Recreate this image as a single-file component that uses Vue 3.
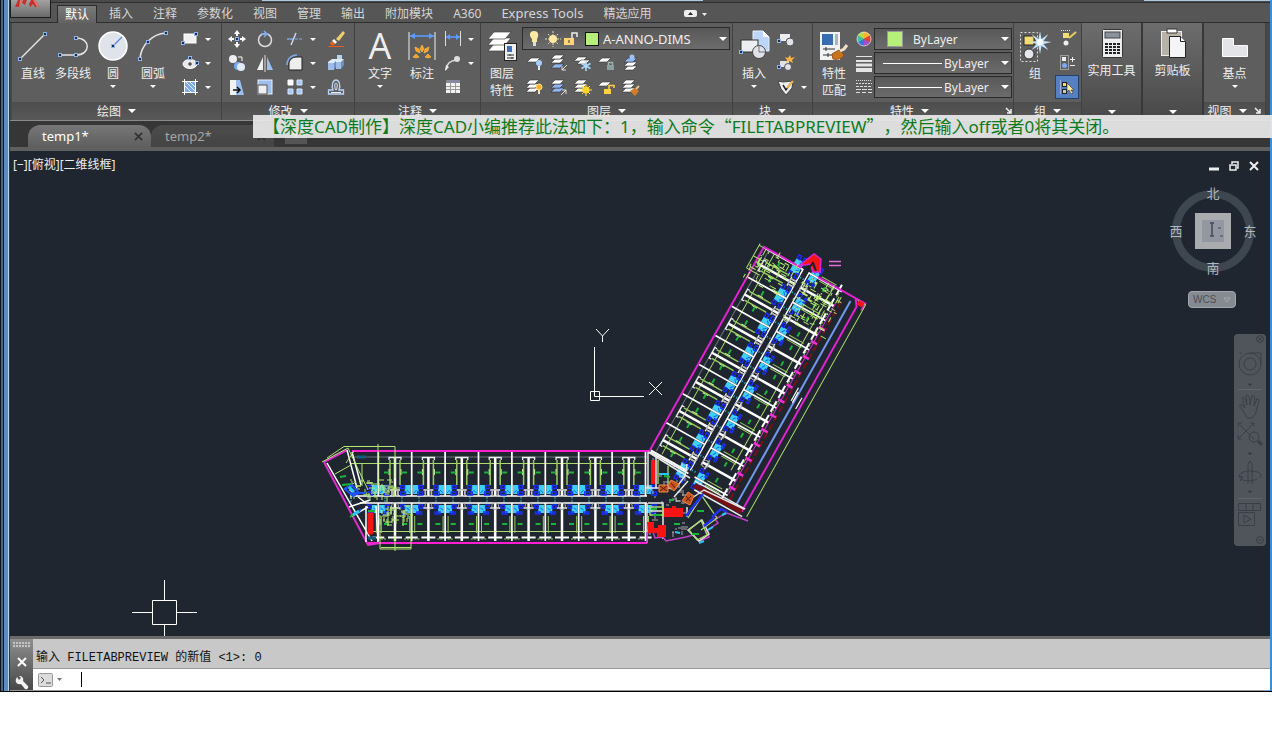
<script setup>
import { ref } from 'vue';

const tabs = ['默认', '插入', '注释', '参数化', '视图', '管理', '输出', '附加模块', 'A360', 'Express Tools', '精选应用'];
const activeTab = ref('默认');
const activeFile = ref('temp1*');
const layer = ref('A-ANNO-DIMS');
const color = ref('ByLayer');
const lineweight = ref('ByLayer');
const linetype = ref('ByLayer');
const command = ref('');

// small blue grip square
const grip = (x, y) => `<rect x="${x - 1.5}" y="${y - 1.5}" width="3" height="3" fill="#222c3c" stroke="#8db4f0"/>`;
// stacked sheets used by the layer tools
const sheet = (x, y, fill = '#fff') => `<path d="M${x + 4} ${y}h9l-4 4h-9z" fill="${fill}" stroke="#333" stroke-width=".6"/>`;
const sheets = (last = '#fff') => sheet(1, 11, last) + sheet(1, 7) + sheet(1, 3);

const icons = {
  line: `<path d="M4 30 29 5" stroke="#e4e4e4" stroke-width="1.5"/>${grip(4, 30)}${grip(29, 5)}`,
  pline: `<path d="M4 26h16c15 0 15-17 0-17" fill="none" stroke="#e4e4e4" stroke-width="1.5"/>${grip(4, 26)}${grip(20, 26)}${grip(20, 9)}`,
  circle: `<circle cx="17" cy="17" r="14" fill="#dfe3ea" stroke="#fff" stroke-width="1.5"/><path d="M17 17l9-9" stroke="#4f86e0" stroke-width="1.3"/>${grip(17, 17)}`,
  arc: `<path d="M4 30C5 16 16 5 30 4" fill="none" stroke="#e4e4e4" stroke-width="1.5"/>${grip(4, 30)}${grip(12, 13)}${grip(30, 4)}`,
  rect: `<rect x="4" y="5" width="12" height="9" fill="#f0f0f2" stroke="#fff"/>${grip(3, 14)}${grip(16, 5)}`,
  ellipse: `<ellipse cx="10" cy="11" rx="7" ry="4.5" fill="#e8e8ea" stroke="#fff"/><path d="M8 11h4M10 9v4" stroke="#222"/>${grip(10, 5)}${grip(17, 10)}`,
  hatch: `<rect x="5" y="5" width="10" height="10" fill="#7fabe8"/><path d="M5 9l6 6M6 5l9 9M10 5l5 5" stroke="#e3eeff"/><path d="M2 4.500h16M2 15.500h16M4.500 2v16M15.500 2v16" stroke="#fff"/>`,
  move: `<path d="M10 1l3 4H7zM10 19l3-4H7zM1 10l4-3v6zM19 10l-4-3v6z" fill="#fff"/><path d="M10 4v3M10 13v3M4 10h3M13 10h3" stroke="#fff" stroke-width="2"/>${grip(10, 10)}`,
  rotate: `<circle cx="10" cy="11" r="6.500" fill="none" stroke="#ddd" stroke-width="1.500"/><path d="M6 5h6l-3-3M12 5l-3 3" fill="none" stroke="#7ba9ee" stroke-width="1.600"/>`,
  trim: `<path d="M2 10h6" stroke="#7ba9ee" stroke-width="1.400"/><path d="M10 10h8" stroke="#7ba9ee" stroke-dasharray="3 1"/><path d="M6 16l5-12" stroke="#cfdcf5" stroke-width="1.400"/>`,
  erase: `<path d="M10 10l7-8 2 2-6 8z" fill="#f1cf6a"/><path d="M8 10l3 3-2 2-3-3z" fill="#fff"/><path d="M6 12l3 3c-2 3-5 1-5-1z" fill="#e2641f"/><path d="M2 17.500h16" stroke="#e85a1c"/>`,
  copy: `<circle cx="6" cy="6" r="4" fill="#eee"/><circle cx="11" cy="13" r="4" fill="#7ba9ee"/><circle cx="14" cy="14" r="4" fill="#dfe9fa"/><path d="M11 4h4v4" fill="none" stroke="#fff"/>`,
  mirror: `<path d="M8 4v13H2z" fill="#f0f0f0"/><path d="M12 4v13h6z" fill="#9cbff0"/><path d="M10 2v17" stroke="#ddd"/>`,
  fillet: `<path d="M4 17V11c0-4 3-7 8-7h5v13z" fill="#eee" stroke="#222"/><path d="M2 12C2 6 6 2 12 2" fill="none" stroke="#7ba9ee" stroke-width="1.500"/>`,
  explode: `<path d="M2 9l4-3h12l-3 4H2z" fill="#dfeaf8"/><path d="M2 10h6v7H2zM10 9h5v7h-5z" fill="#9dbce8"/><path d="M15 9l3-3v6l-3 4zM8 10l2-2v6l-2 3z" fill="#6d90c0"/><path d="M11 2h5v4h-5z" fill="#b9d1f3"/>`,
  stretch: `<path d="M3 3h6v15H3z" fill="#f2f2f2"/><path d="M9 3h4l4 15H9z" fill="#9cbff0"/><path d="M6 13h7M10 10l3 3-3 3" fill="none" stroke="#111" stroke-width="1.500"/>`,
  scale: `<rect x="3" y="3" width="14" height="14" fill="#9cbff0" stroke="#e8eefa"/><rect x="3" y="8" width="9" height="9" fill="#f0f0f0" stroke="#555"/>`,
  array: `<path d="M3 3h5v5H3z" fill="#fff" stroke="#fff"/><path d="M12 3h5v5h-5zM3 12h5v5H3zM12 12h5v5h-5z" fill="#a9c8f6" stroke="#d4e4fc"/>`,
  offset: `<path d="M2.500 17v-4h4.500c-2-5 0-10 3-10s5 5 3 10h4.500v4z" fill="none" stroke="#b9d2f7" stroke-width="1.300"/><path d="M5 15.500h10M9.500 13c-1-4-1-7 .5-7s1.500 3 .5 7" fill="none" stroke="#e8eefa"/>`,
  dim: `<path d="M4 3v28M30 3v28" stroke="#eee"/><path d="M5 7h24" stroke="#5d9bff" stroke-width="1.600"/><path d="M5 7l5-3v6zM29 7l-5-3v6z" fill="#5d9bff"/><path d="M17 16l2 4-2 3-2-3zM10 18l4 2 1 4-4-2zM24 18l-4 2-1 4 4-2zM8 28l3-3 3 3-3 1zM26 28l-3-3-3 3 3 1z" fill="#ff9c1c" stroke="#ffcf58" stroke-width=".6"/>`,
  dimlin: `<path d="M2.500 2v15M17.500 2v15" stroke="#ddd"/><path d="M3 8h14" stroke="#5d9bff" stroke-width="1.600"/><path d="M3 8l4-3v6zM17 8l-4-3v6z" fill="#5d9bff"/>`,
  leader: `<path d="M3 17C4 10 7 8 13 7" fill="none" stroke="#ddd" stroke-width="1.400"/><circle cx="14" cy="6" r="3" fill="#ddd"/><path d="M2 18l1-6 3 2z" fill="#eee"/>`,
  table: `<rect x="3" y="3" width="14" height="13" fill="#f2f2f2"/><path d="M3 4.500h14" stroke="#8888a0" stroke-width="3"/><path d="M3 9.500h14M3 12.500h14M7.500 6v10M12.500 6v10" stroke="#999"/>`,
  layers: `<g stroke="#444" stroke-width=".7" fill="#fff"><path d="M9 15h17l-6 7H3z"/><path d="M9 9h17l-6 7H3z"/><path d="M9 3h17l-6 7H3z"/></g><rect x="19.500" y="14.500" width="12" height="17" fill="#eee" stroke="#222"/><rect x="22" y="17" width="5" height="6" fill="#3f6fb8"/><path d="M22 26h7M22 29h7M25 25v2M27 28v2" stroke="#333"/>`,
  lyOff: `${sheet(2, 5)}<circle cx="14" cy="10" r="3" fill="#a8ccff"/><path d="M14 13v4" stroke="#dce9fb" stroke-width="2"/>`,
  lyIso: `${sheet(2, 11, '#8fb8f3')}${sheet(2, 6)}${sheet(2, 2)}<path d="M18 12l-5 5M13 13v4h4" stroke="#ddd" fill="none"/>`,
  lyFreeze: `${sheet(1, 4)}${sheet(4, 7)}<path d="M13 8v10M8.500 10.500l9 5M17.500 10.500l-9 5" stroke="#a9dcff" stroke-width="1.600"/>`,
  lyLock: `${sheet(1, 5)}<rect x="10" y="12" width="7" height="5" fill="#8ca0a0"/><path d="M11.500 12V9.500h4V12" fill="none" stroke="#9db3b3" stroke-width="1.400"/>`,
  lyCurrent: `${sheet(3, 13)}${sheet(3, 9)}${sheet(3, 5, '#8fb8f3')}<circle cx="11" cy="4" r="2.500" fill="#9fc1f5"/>`,
  lyOn: `${sheets()}<circle cx="14" cy="10" r="3" fill="#ffae2b" stroke="#ffe08a"/><path d="M14 13v4" stroke="#f2e2bd" stroke-width="2"/>`,
  lyUniso: `${sheet(2, 11, '#8fb8f3')}${sheet(2, 7, '#8fb8f3')}${sheet(2, 3)}<path d="M12 18l5-5M13 13h4v4" stroke="#ddd" fill="none"/>`,
  lyThaw: `${sheets()}<path d="M13 7v12M7 13h12M9 9l8 8M17 9l-8 8" stroke="#ffdc38"/><circle cx="13" cy="13" r="3.600" fill="#ffd226"/>`,
  lyUnlock: `${sheet(1, 5)}<rect x="7" y="12" width="7" height="5" fill="#ffd044"/><path d="M12 12V8.500h5V11" fill="none" stroke="#ffd044" stroke-width="1.500"/>`,
  lyMatch: `${sheets()}<path d="M9 14l5-3 4 3-4 5z" fill="#d77a2a"/><path d="M15 12l3-3" stroke="#e8c48a" stroke-width="2"/>`,
  insert: `<path d="M16 2h10l6 6v14H16z" fill="#bcd6fa" stroke="#e8f1ff"/><path d="M26 2v6h6" fill="#fff"/><rect x="4" y="11" width="17" height="12" fill="#eceef2" stroke="#333"/><circle cx="22" cy="23" r="6.500" fill="#dfe2e8" stroke="#444"/><path d="M22 23v-7M22 23h6" stroke="#777"/>${grip(4, 23)}`,
  blkCreate: `<rect x="4" y="5" width="10" height="7" fill="#eceef2"/><circle cx="14" cy="13" r="4" fill="#dfe2e8" stroke="#555"/>${grip(3, 12)}`,
  blkEdit: `<rect x="4" y="8" width="9" height="6" fill="#dfe2e8"/><circle cx="12" cy="14" r="3.500" fill="#dfe2e8" stroke="#555"/><path d="M14 2l1 3 4-1-3 3 1 3-4-2-3 2 1-3-2-3 3 1z" fill="#ffb040"/>${grip(3, 14)}`,
  blkAttr: `<path d="M2 4l5 1 10-1-1 7-6 7-5-6z" fill="#eceef2" stroke="#444"/><path d="M7 8l3 5 5-7" fill="none" stroke="#222" stroke-width="1.500"/><path d="M11 11l6-7" stroke="#efb64e" stroke-width="2"/>`,
  match: `<rect x="3" y="3" width="20" height="28" fill="#f0f2f4"/><rect x="5" y="5" width="11" height="11" fill="#386db0"/><path d="M18 5h3v11h-3z" fill="#aab4c0"/><path d="M6 20h12M6 26h9M9 18v4M11 24v4" stroke="#333"/><path d="M15 25l7-4 5 5c-2 4-7 5-11 4z" fill="#c8741e" stroke="#9c5514"/><path d="M23 22l4-2 3-4" fill="none" stroke="#ece0c8" stroke-width="3"/>`,
  wheel: `<path d="M10 10V3a7 7 0 0 1 6 3.500z" fill="#ffb02e"/><path d="M10 10l6-3.500a7 7 0 0 1 0 7z" fill="#e93f33"/><path d="M10 10l6 3.500A7 7 0 0 1 10 17z" fill="#a451c9"/><path d="M10 10v7a7 7 0 0 1-6-3.500z" fill="#3c74e0"/><path d="M10 10l-6 3.500a7 7 0 0 1 0-7z" fill="#3fc1a5"/><path d="M10 10L4 6.500A7 7 0 0 1 10 3z" fill="#b6dd45"/><circle cx="10" cy="10" r="7" fill="none" stroke="#fff" stroke-opacity=".6"/>`,
  weights: `<path d="M2 3.500h16" stroke="#e4e4e4"/><path d="M2 8h16" stroke="#e4e4e4" stroke-width="2"/><path d="M2 12h16" stroke="#e4e4e4" stroke-width="3"/><path d="M2 17h16" stroke="#e4e4e4" stroke-width="4"/>`,
  types: `<g stroke="#ddd"><path d="M2 3.500h16" stroke-dasharray="1 1"/><path d="M2 6.500h16" stroke-dasharray="2 1"/><path d="M2 9.500h16" stroke-dasharray="3 1"/><path d="M2 12.500h16" stroke-dasharray="5 1"/><path d="M2 15.500h16" stroke-dasharray="4 2"/></g>`,
  group: `<path d="M2.500 3.500h17v29h-17z" fill="none" stroke="#ddd" stroke-dasharray="2 2"/><rect x="6" y="7" width="10" height="9" fill="#f3dc74" stroke="#222"/><circle cx="11" cy="25" r="5" fill="#e4e6ea" stroke="#333"/><path d="M22 2l1.500 8 7-5-5 7 8 1-8 2 5 6-7-4-1.500 8-1.500-8-7 4 5-6-6-2 6-1-5-7 7 5z" fill="#c2e6ff"/><circle cx="22" cy="13" r="3" fill="#fff"/>`,
  grpEdit: `<path d="M4 1.500h10" stroke="#ddd" stroke-dasharray="1 1"/><rect x="6" y="4" width="6" height="5" fill="#f3dc74"/><circle cx="9" cy="14" r="2.500" fill="#eee"/><path d="M12 9l7-6" stroke="#e6ce62" stroke-width="2"/>`,
  grpAdd: `<path d="M3.500 2.500h8v14h-8z" fill="none" stroke="#ddd" stroke-dasharray="1 1"/><rect x="5" y="4" width="4" height="4" fill="#eee"/><circle cx="7.500" cy="12.500" r="2.500" fill="#7ba9ee"/><path d="M13 6.500h5M15.500 4v5M13 12.500h5" stroke="#eee"/>`,
  grpSel: `<path d="M3.500 3.500v13" stroke="#ddd" stroke-dasharray="1 1"/><rect x="5.500" y="5.500" width="4" height="4" fill="#f3dc74" stroke="#222"/><rect x="5.500" y="12.500" width="4" height="4" fill="#ccc" stroke="#222"/><path d="M10 6v9l2-2 2 4 2-1-2-3h3z" fill="#ffeaa0" stroke="#333" stroke-width=".6"/>`,
  calc: `<rect x="7.500" y="3.500" width="20" height="28" rx="1" fill="#eceef0" stroke="#333"/><rect x="10" y="6" width="15" height="6" fill="#8a929c" stroke="#444"/><g fill="#222"><path d="M10 17h3v2h-3zM14 17h3v2h-3zM18 17h3v2h-3zM22 17h3v2h-3zM10 20h3v2h-3zM14 20h3v2h-3zM18 20h3v2h-3zM22 20h3v2h-3zM10 23h3v2h-3zM14 23h3v2h-3zM18 23h3v2h-3zM22 23h3v2h-3zM10 26h3v2h-3zM14 26h3v2h-3zM18 26h3v2h-3zM22 26h3v2h-3z"/></g>`,
  paste: `<rect x="5.500" y="5.500" width="20" height="24" fill="#b9b2a6" stroke="#eee"/><path d="M11 3h10v4H11z" fill="#fff" stroke="#333"/><path d="M13.500 10.500h11l5 5v16h-16z" fill="#f5f5f7" stroke="#222"/><path d="M24.500 10.500v5h5" fill="#fff" stroke="#222"/>`,
  base: `<path d="M4.500 9.500h11v7h14v11h-25z" fill="#e2e4e8" stroke="#fff"/>`,
};

const draw = [
  { icon: 'line', text: '直线' },
  { icon: 'pline', text: '多段线' },
  { icon: 'circle', text: '圆', drop: true },
  { icon: 'arc', text: '圆弧', drop: true },
];
const modify = ['move', 'rotate', 'trim', 'erase', 'copy', 'mirror', 'fillet', 'explode', 'stretch', 'scale', 'array', 'offset'];
const withDrop = ['trim', 'fillet', 'array'];
const layerTools = ['lyOff', 'lyIso', 'lyFreeze', 'lyLock', 'lyCurrent', 'lyOn', 'lyUniso', 'lyThaw', 'lyUnlock', 'lyMatch'];

// Both wings of the floor plan share one bay module
const PITCH = 33.4;
const wing = (first, count, start, end) => ({
  start,
  end,
  wide: Array.from({ length: count }, (_, i) => first + i * PITCH),
  thin: Array.from({ length: count + 1 }, (_, i) => first - PITCH / 2 + i * PITCH),
});
const wings = [
  { ...wing(395, 8, 350, 647), move: 'translate(0 451)' },
  { ...wing(15, 7, 2, 233), move: 'translate(650 450) rotate(-60.7)' },
];

// dense dimension marks, same sequence on every load
function scatter(seed, n, x, y, w, h) {
  let s = seed;
  const next = () => (s = (s * 16807) % 2147483647) / 2147483647;
  let d = '';
  for (let i = 0; i < n; i++) {
    const px = Math.round(x + next() * w);
    const py = Math.round(y + next() * h);
    const len = 2 + Math.round(next() * 5);
    d += next() > 0.5 ? `M${px} ${py}h${len}` : `M${px} ${py}v${len}`;
  }
  return d;
}
const marks = {
  left: scatter(11, 60, 350, 480, 44, 16) + scatter(5, 34, 380, 505, 30, 22),
  top: scatter(23, 60, 196, -4, 34, 44) + scatter(31, 100, 180, 50, 48, 44),
};
const whiteMarks = scatter(7, 40, 650, 458, 35, 80);
</script>

<template>
  <div class="window">
    <header class="titlebar">
      <button class="logo" aria-label="应用程序菜单">
        <svg viewBox="0 0 40 18" width="40" height="18">
          <path d="M7 0h4L8 7H4zM12 0h4l-2 5-3-2zM20 0h4l4 7h-4l-2-3-3 3-1-3z" fill="#c9302a" />
          <path d="M9 0h2L8 7zM22 0h2l4 7h-2z" fill="#e8756c" />
        </svg>
      </button>
      <nav class="tabs">
        <button v-for="t in tabs" :key="t" :class="{ active: t === activeTab, latin: t === 'Express Tools' }" @click="activeTab = t">{{ t }}</button>
        <button class="collapse" aria-label="最小化功能区">
          <svg viewBox="0 0 24 10" width="24" height="10">
            <rect x="1" y="1" width="13" height="7" rx="2" fill="#eee" />
            <path d="M5 6h5L7.500 3z" fill="#222" />
            <path d="M19 4h5l-2.500 3z" fill="#eee" />
          </svg>
        </button>
      </nav>
    </header>

    <div class="ribbon">
      <section class="panel draw">
        <div class="body">
          <button v-for="b in draw" :key="b.icon" class="big">
            <svg viewBox="0 0 34 34" v-html="icons[b.icon]"></svg>
            <span>{{ b.text }}</span><i v-if="b.drop" class="arrow"></i>
          </button>
          <div class="column">
            <button v-for="n in ['rect', 'ellipse', 'hatch']" :key="n" class="small" :aria-label="n">
              <svg viewBox="0 0 20 20" v-html="icons[n]"></svg><i class="arrow"></i>
            </button>
          </div>
        </div>
        <h2>绘图<i class="arrow wide"></i></h2>
      </section>

      <section class="panel modify">
        <div class="body">
          <button v-for="n in modify" :key="n" class="small" :aria-label="n">
            <svg viewBox="0 0 20 20" v-html="icons[n]"></svg><i v-if="withDrop.includes(n)" class="arrow"></i>
          </button>
        </div>
        <h2>修改<i class="arrow wide"></i></h2>
      </section>

      <section class="panel annotate">
        <div class="body">
          <button class="big"><b class="letter">A</b><span>文字</span><i class="arrow"></i></button>
          <button class="big"><svg viewBox="0 0 34 34" v-html="icons.dim"></svg><span>标注</span></button>
          <div class="column">
            <button class="small" aria-label="线性"><svg viewBox="0 0 20 20" v-html="icons.dimlin"></svg><i class="arrow"></i></button>
            <button class="small" aria-label="引线"><svg viewBox="0 0 20 20" v-html="icons.leader"></svg><i class="arrow"></i></button>
            <button class="small" aria-label="表格"><svg viewBox="0 0 20 20" v-html="icons.table"></svg></button>
          </div>
        </div>
        <h2>注释<i class="arrow wide"></i></h2>
      </section>

      <section class="panel layer">
        <div class="body">
          <button class="big"><svg viewBox="0 0 34 34" v-html="icons.layers"></svg><span>图层<br>特性</span></button>
          <div class="layer-side">
            <label class="combo">
              <svg viewBox="0 0 80 20" width="80" height="20">
                <path d="M11 2c5 0 5 5 3 8v3H9v-3C6 7 6 2 11 2z" fill="#ffe9a3" /><path d="M10 13h3v4h-3z" fill="#ddd" />
                <path d="M30 2v16M22 10h16M25 5l10 10M35 5 25 15" stroke="#e6dcb0" stroke-dasharray="2 1" /><circle cx="30" cy="10" r="4" fill="#ffe9a3" />
                <rect x="41" y="9" width="10" height="7" fill="#ffd579" /><path d="M46 11v3" stroke="#333" />
                <path d="M49 9V4h5v4" fill="none" stroke="#eee" stroke-width="1.500" />
                <rect x="62.500" y="3.500" width="13" height="13" fill="#b6f07a" stroke="#111" />
              </svg>
              <select v-model="layer" aria-label="图层"><option>A-ANNO-DIMS</option></select>
              <i class="arrow wide"></i>
            </label>
            <div class="layer-tools">
              <button v-for="n in layerTools" :key="n" class="small" :aria-label="n">
                <svg viewBox="0 0 20 20" v-html="icons[n]"></svg>
              </button>
            </div>
          </div>
        </div>
        <h2>图层<i class="arrow wide"></i></h2>
      </section>

      <section class="panel block">
        <div class="body">
          <button class="big"><svg viewBox="0 0 34 34" v-html="icons.insert"></svg><span>插入</span><i class="arrow"></i></button>
          <div class="column">
            <button class="small" aria-label="创建块"><svg viewBox="0 0 20 20" v-html="icons.blkCreate"></svg></button>
            <button class="small" aria-label="编辑块"><svg viewBox="0 0 20 20" v-html="icons.blkEdit"></svg></button>
            <button class="small" aria-label="编辑属性"><svg viewBox="0 0 20 20" v-html="icons.blkAttr"></svg><i class="arrow"></i></button>
          </div>
        </div>
        <h2>块<i class="arrow wide"></i></h2>
      </section>

      <section class="panel props">
        <div class="body">
          <button class="big"><svg viewBox="0 0 34 34" v-html="icons.match"></svg><span>特性<br>匹配</span></button>
          <div class="column">
            <button v-for="n in ['wheel', 'weights', 'types']" :key="n" class="small" :aria-label="n">
              <svg viewBox="0 0 20 20" v-html="icons[n]"></svg>
            </button>
          </div>
          <div class="column combos">
            <label class="combo">
              <i class="swatch"></i>
              <select v-model="color" aria-label="颜色"><option>ByLayer</option></select><i class="arrow wide"></i>
            </label>
            <label class="combo">
              <i class="rule"></i>
              <select v-model="lineweight" aria-label="线宽"><option>ByLayer</option></select><i class="arrow wide"></i>
            </label>
            <label class="combo">
              <i class="rule long"></i>
              <select v-model="linetype" aria-label="线型"><option>ByLayer</option></select><i class="arrow wide"></i>
            </label>
          </div>
        </div>
        <h2>特性<i class="arrow wide"></i><svg class="launch" viewBox="0 0 8 8"><path d="M1 1l5 5M6 2v4H2" fill="none" stroke="#eee" stroke-width="1.500" /></svg></h2>
      </section>

      <section class="panel group">
        <div class="body">
          <button class="big"><svg viewBox="0 0 34 34" v-html="icons.group"></svg><span>组</span></button>
          <div class="column">
            <button v-for="n in ['grpEdit', 'grpAdd', 'grpSel']" :key="n" class="small" :class="{ on: n === 'grpSel' }" :aria-label="n">
              <svg viewBox="0 0 20 20" v-html="icons[n]"></svg>
            </button>
          </div>
        </div>
        <h2>组<i class="arrow wide"></i></h2>
      </section>

      <button class="panel tall"><svg viewBox="0 0 34 34" v-html="icons.calc"></svg><span>实用工具</span><i class="arrow wide"></i></button>
      <button class="panel tall"><svg viewBox="0 0 34 34" v-html="icons.paste"></svg><span>剪贴板</span><i class="arrow wide"></i></button>

      <section class="panel view">
        <div class="body">
          <button class="big"><svg viewBox="0 0 34 34" v-html="icons.base"></svg><span>基点</span><i class="arrow"></i></button>
        </div>
        <h2>视图<i class="arrow wide"></i><svg class="launch" viewBox="0 0 8 8"><path d="M1 1l5 5M6 2v4H2" fill="none" stroke="#eee" stroke-width="1.500" /></svg></h2>
      </section>
    </div>

    <p class="caption">【深度<span>CAD</span>制作】深度<span>CAD</span>小编推荐此法如下：<span>1</span>，输入命令“<span>FILETABPREVIEW</span>”，然后输入<span>off</span>或者<span>0</span>将其关闭。</p>

    <div class="files">
      <div v-for="f in ['temp1*', 'temp2*']" :key="f" class="file" :class="{ active: f === activeFile }">
        <button @click="activeFile = f">{{ f }}</button>
        <button class="close" aria-label="关闭">
          <svg viewBox="0 0 10 10"><path d="M1 1l8 8M9 1 1 9" stroke="#333" stroke-width="2" /></svg>
        </button>
      </div>
      <button class="add" aria-label="新建">
        <svg viewBox="0 0 22 16"><path d="M7 6h8M11 2v8" stroke="#ccc" stroke-width="2" /></svg>
      </button>
    </div>

    <main class="canvas">
      <svg class="plan" viewBox="10 151 1260 485">
        <g v-for="w in wings" :key="w.move" :transform="w.move" fill="none">
          <path :d="`M${w.start} 6H${w.end}`" stroke="#68707a" />
          <path :d="`M${w.start} 12.500H${w.end}M${w.start + 20} 80.500H${w.end}`" stroke="#a9dc6c" />
          <path :d="`M${w.start} 45H${w.end}M${w.start + 10} 52H${w.end}`" stroke="#fff" stroke-width="1.500" />
          <path :d="`M${w.start} 47H${w.end}M${w.start} 50H${w.end}`" stroke="#29b6c6" stroke-dasharray="2 15" />
          <g v-for="x in w.thin" :key="'t' + x">
            <path :d="`M${x - 7} 34h6v9h-6zM${x + 1} 34h6v9h-6zM${x - 7} 54h6v8h-6zM${x + 1} 54h6v8h-6z`" fill="#3fd0f6" />
            <path :d="`M${x - 5} 39l3 3M${x + 5} 39l-3 3M${x - 5} 57l3 2M${x + 2} 57l3 2`" stroke="#1468e8" />
            <path :d="`M${x - 11} 34.500h4v3h-4zM${x + 7} 34.500h4v3h-4zM${x - 11} 41h5v3h-5zM${x + 6} 41h5v3h-5zM${x - 11} 54h4v3h-4zM${x + 7} 54h4v3h-4zM${x - 10} 61h5v2h-5zM${x + 5} 61h5v2h-5z`" stroke="#1a2fff" stroke-width="1.300" />
            <path :d="`M${x} 1V45M${x} 52V90`" stroke="#fff" stroke-width="1.700" />
            <path :d="`M${x - 6} 86.500h12`" stroke="#fff" stroke-width="2" />
            <path :d="`M${x - 2} 65V82M${x + 3} 65V82`" stroke="#98cc62" />
          </g>
          <g v-for="x in w.wide" :key="'w' + x">
            <path :d="`M${x} 6V45M${x} 52V90`" stroke="#fff" stroke-width="2.500" />
            <path :d="`M${x - 6} 9V6.500h12V9M${x - 3} 40v5M${x + 3} 40v5M${x - 5} 39h10M${x - 5} 57h10`" stroke="#eee" stroke-width="1.300" />
            <path :d="`M${x - 7} 86.500h14`" stroke="#fff" stroke-width="2" />
            <circle :cx="x" cy="42" r="3.500" stroke="#a5a8ac" /><circle :cx="x" cy="55" r="3.500" stroke="#a5a8ac" />
            <path :d="`M${x - 5} 9V34M${x + 5} 9V34`" stroke="#98cc62" stroke-width="1.500" />
            <path :d="`M${x - 6} 18v6M${x + 6} 18v6`" stroke="#d8f5a0" />
            <path :d="`M${x - 11} 21.500h5M${x + 7} 21.500h5M${x - 11} 73h5M${x + 7} 73h5`" stroke="#19b43a" stroke-width="2" />
            <path :d="`M${x - 14} 88h5M${x + 9} 88h5`" stroke="#98cc62" stroke-dasharray="2 1" />
          </g>
        </g>

        <!-- west wing outline and stair -->
        <g fill="none">
          <path d="M352 451H650M368 543H647" stroke="#ff1ed2" stroke-width="2" />
          <path d="M324 462 368 545l12-2M324 462l23-12" stroke="#e22cd0" stroke-width="2" />
          <path d="M327 463 372 541M347 450l10 38M352 452l9 33M350 490l7 6M352 516l16-9M349 507l21-7M366 506v36M376 506l2 36M358 497l8 6" stroke="#fff" stroke-width="1.500" />
          <path d="M327 458 344 446.500h51v32M322 462l26-14 20 42M378 444v42M335 474l16-9M344 489l12-7M354 451l-8 12M362 464v22M380 515v34h31V508M395 535v16M381 547.500h30M388 506v20M396 508v16M404 510v12" stroke="#b3e873" />
          <path :d="marks.left" stroke="#b3e873" />
          <path d="M357 457h9M368 538h8" stroke="#12607f" stroke-width="3" />
          <path d="M342 485l10-1M368 511h7M350 517l6-4M340 477l6-1" stroke="#19b43a" stroke-width="2" />
          <path d="M345 489l8 7 6-3-7-8zM352 493h14M357 514l4-5" stroke="#1a4fff" stroke-width="2" />
          <path d="M349 487l5 5M353 515l6-4" stroke="#25c9f3" stroke-width="3" />
          <rect x="368" y="513" width="5" height="21" rx="1" fill="#f51414" stroke="#f51414" />
        </g>

        <!-- north-east wing outline and balconies -->
        <g transform="translate(650 450) rotate(-60.7)" fill="none">
          <path d="M0 0H233V43M233 62V116H225M233 105 226 110H-9" stroke="#e022d0" stroke-width="2" />
          <path d="M-9 102H228" stroke="#7397ec" stroke-width="2" />
          <path d="M-11 117H232V108M232 0v-5M206-5h28M206-5V10M220-5V6" stroke="#a9dc6c" />
          <path d="M-4 94H226" stroke="#7b1116" stroke-width="2" stroke-dasharray="7 3" />
          <path d="M0 90H220" stroke="#d02fc4" />
          <path d="M7 87v7M23 87v7M40 87v7M57 87v7M73 87v7M90 87v7M107 87v7M124 87v7M140 87v7M157 87v7M174 87v7M190 87v7" stroke="#f22fd5" stroke-width="2.500" />
          <path d="M-9 56V110" stroke="#751014" stroke-width="5" />
          <path d="M-5 54V112M-13 58V113" stroke="#eee" stroke-width="1.500" />
          <path d="M0 1V42" stroke="#fff" stroke-width="2" />
          <path :d="marks.top" stroke="#b3e873" />
          <path d="M233 112h-5" stroke="#f51414" stroke-width="6" />
          <path d="M112 99h15M107 107h13M111 101h12" stroke="#fff" stroke-width="1.200" />
        </g>
        <path d="M800 265l14-11 7 5-1 13h-7l-3-8-5 1z" fill="#f51414" stroke="#e022d0" stroke-width="1.500" />
        <path d="M807 270l6-7 3 8" fill="none" stroke="#172028" stroke-width="2" />
        <path d="M829 261.500h12M829 265.500h12" stroke="#e06ddc" stroke-width="1.500" />

        <!-- core between the wings -->
        <g fill="none">
          <path d="M648 452v36M656 456v32M656 488h20l9-12 2-12M676 488h-30M648 503h15v36M687 517V507M648 452l42 26M688 481l-14 16M650 511h12M647 503v40M692 498l12-8 40 19" stroke="#e6e6e6" stroke-width="1.500" />
          <path :d="whiteMarks" stroke="#e4e4e4" stroke-opacity=".7" />
          <path d="M647 543v-10l6-1 2 6 8-1 3 4 20-4 7-2 6 6 10-4-3-6 12-8-3-4 12-6 21 8" stroke="#c240c8" stroke-width="1.500" />
          <path d="M688 530l14-10 7 14-10 7z" stroke="#e6e6e6" stroke-width="1.500" />
          <path d="M688 518l14-22 15 22-16 12M689 530l12-10 6 15-10 5zM650 507h13v8h-13zM658 460v24M668 466v20" stroke="#a9dc6c" stroke-width="1.300" />
          <path d="M686 516l17-22M704 526l10-8M712 517l9-8 6 3" stroke="#2330f0" stroke-width="2.500" />
          <path d="M651 460h4v24h-4zM664 508h8v-2h4v2h7v9h-19zM647 522h7v6h4v-3h8v12h-9v-4h-9z" fill="#f51414" />
          <path d="M659 485h9v7h-9zM671 480l8 4-5 7-6-5zM688 492l6 4-4 9-8-4z" fill="#c9521b" stroke="#e8874f" />
          <path d="M660 486l7 5M667 486l-7 5M671 483l4 5M686 496l4 5M691 496l-5 5" stroke="#54200c" />
          <path d="M669 500h5M697 511h7M674 524h6M651 509h6M692 534h7M664 476l6 1M653 515h8" stroke="#19b43a" stroke-width="2" />
          <path d="M659 474h10M675 532l5 1M699 543l5-2M708 530l5-3M722 515l4-2" stroke="#25c9f3" stroke-width="2" />
        </g>

        <!-- UCS icon and crosshair -->
        <g fill="none" stroke="#fff">
          <path d="M594.500 347V396.500H644M590.500 391.500h9v9h-9z" />
          <path d="M596 329l6.500 7 6.500-7M602.500 336v6M649 382l13 13M662 382l-13 13" />
          <path d="M164.500 580v20M164.500 625v11M132 612.500h20M177 612.500h20M152.500 600.500h24v24h-24z" />
        </g>
      </svg>

      <span class="viewport">[−][俯视][二维线框]</span>
      <div class="win-buttons">
        <button aria-label="最小化"><svg viewBox="0 0 10 10"><path d="M0 8h10" stroke="#eee" stroke-width="3" /></svg></button>
        <button aria-label="还原"><svg viewBox="0 0 10 10"><path d="M1 4h6v5H1zM3 3V1h6v6H8" fill="none" stroke="#eee" stroke-width="1.500" /></svg></button>
        <button aria-label="关闭"><svg viewBox="0 0 10 10"><path d="M1 1l8 8M9 1 1 9" stroke="#eee" stroke-width="2" /></svg></button>
      </div>
      <div class="compass">
        <span>北</span>
        <span class="west">西</span>
        <button class="face" aria-label="上">
          <svg viewBox="0 0 36 36"><rect x="7" y="7" width="22" height="22" fill="#9297a1" /><path d="M15 10h4M17 10v13M15 23h4" stroke="#444a55" stroke-width="1.500" /><path d="M23 15h3M25 23h3" stroke="#444a55" /></svg>
        </button>
        <span class="east">东</span>
        <span>南</span>
      </div>
      <button class="wcs">WCS <svg viewBox="0 0 8 6"><path d="M1 1h6L4 5z" fill="none" stroke="#a5a8ad" /></svg></button>
      <div class="navbar">
        <svg viewBox="0 0 32 212" fill="none" stroke="#3a3f46">
          <circle cx="26" cy="5" r="3.500" /><path d="M24 3l4 4M28 3l-4 4" />
          <circle cx="16" cy="30" r="11" /><circle cx="16" cy="30" r="6" /><path d="M16 19h11v11M7 20l-1-2" />
          <path d="M14 50h4l-2 2z" fill="#3a3f46" />
          <path d="M11 80c-3-5-6-7-5-9 3-1 4 3 5 3l-3-10c2-2 3 0 5 7l-1-9c2-2 4 0 4 9l2-9c3-1 3 1 2 10l3-7c3 0 2 2 0 9-1 6-3 8-5 10h-5z" />
          <path d="M4 89l16 16M20 89 4 105M4 93v-4h4M16 89h4v4M4 101v4h4" /><circle cx="20" cy="103" r="5" /><path d="M24 107l4 4" stroke-width="3" />
          <path d="M14 119h4l-2 2z" fill="#3a3f46" />
          <path d="M14 130v20M18 130v20M14 130l2-3 2 3M26 144c3-3 0-7-10-7s-13 5-9 8 12 2 16 0M6 147l3-4-4-1" />
          <path d="M14 157h4l-2 2z" fill="#3a3f46" />
          <path d="M4.500 169.500h22v7h-22zM12 169v8M19 169v8M4.500 178.500h16v13h-16zM10 181l7 4-7 4z" />
          <circle cx="26" cy="206" r="3.500" /><path d="M24 206h4" />
          <path d="M4 55.500h24M4 164.500h24" stroke="#60656c" />
        </svg>
      </div>
    </main>

    <footer class="command">
      <div class="handle">
        <i class="dots"></i>
        <button aria-label="关闭"><svg viewBox="0 0 14 14"><path d="M3 3l8 8M11 3l-8 8" stroke="#fff" stroke-width="2" /></svg></button>
        <button aria-label="自定义"><svg viewBox="0 0 14 14"><path d="M2 1l2 3 2-2-2-2c3 0 5 2 4 5l5 5c1 2-1 4-3 3L6 8C2 9 0 6 1 3z" fill="#f2f2f2" /></svg></button>
      </div>
      <div class="console">
        <p>输入 FILETABPREVIEW 的新值 &lt;1&gt;: 0</p>
        <label class="prompt">
          <svg viewBox="0 0 26 14" width="26" height="14"><rect x=".5" y=".5" width="14" height="13" rx="1" fill="#dcdcdc" stroke="#999" /><path d="M3 4l3 3-3 3M8 10h5" fill="none" stroke="#555" /><path d="M19 5h5l-2.500 3z" fill="#777" /></svg>
          <i class="caret"></i>
          <input v-model="command" type="text" aria-label="命令">
        </label>
      </div>
    </footer>
  </div>
</template>

<style>
body {
  margin: 0;
  background: #fff;
}
</style>

<style scoped>
.window {
  position: relative;
  box-sizing: border-box;
  display: flex;
  flex-direction: column;
  height: calc(100vh - 38px);
  min-height: 500px;
  padding: 0 2px 1px 10px;
  background:
    linear-gradient(#000, #000) bottom / 100% 1px no-repeat,
    linear-gradient(#3a8fdc, #3a8fdc) right / 2px 100% no-repeat,
    linear-gradient(90deg, #0b1520 1px, #4c6580 1px 3px, #0b1520 3px 4px, #5a8ec2 4px 8px, #b8d3e8 8px 9px, #2a3644 9px 10px) left / 10px 100% no-repeat,
    #555;
  font-family: "Noto Sans", "Noto Sans CJK SC", sans-serif;
  font-size: 12px;
  color: #eee;
}

button {
  padding: 0;
  border: 0;
  background: none;
  color: inherit;
  font: inherit;
}

svg {
  display: block;
  flex: none;
}

.arrow {
  width: 0;
  height: 0;
  border: 3px solid transparent;
  border-top-color: #fff;
  border-bottom: 0;
}

.arrow.wide {
  border-width: 4px;
  border-bottom: 0;
}

.titlebar {
  display: flex;
  height: 22px;
  border-bottom: 1px solid #2e2e2e;
  background:
    linear-gradient(90deg, transparent 20%, #a8cbe2 20% 55%, transparent 55% 90%, #a8cbe2 90%) top / 100% 1px no-repeat,
    linear-gradient(#4a4a4a 2px, #2e2e2e 2px 3px, #565656 3px);
}

.logo {
  width: 41px;
  height: 18px;
  border: 1px solid #1c1c1c;
  border-top: 0;
  background: linear-gradient(#a2a2a2, #6a6a6a);
  overflow: hidden;
}

.tabs {
  display: flex;
  gap: 4px;
  margin: 5px 0 0 6px;
}

.tabs button {
  padding: 0 8px;
  line-height: 17px;
  color: #d5d5d5;
  white-space: nowrap;
}

.tabs .latin {
  font-size: 13px;
}

.tabs .active {
  box-sizing: border-box;
  height: 18px;
  padding: 0 7px;
  border: 1px solid #2b2b2b;
  border-bottom: 0;
  background: linear-gradient(#7a7a7a, #626262);
  color: #fff;
}

.tabs .collapse {
  margin-left: 12px;
}

.ribbon {
  display: flex;
  height: 97px;
  border-bottom: 1px solid #8a8a8a;
  padding-left: 2px;
  background: #474747;
}

.panel {
  display: flex;
  flex-direction: column;
  flex: none;
  box-sizing: border-box;
  border-right: 1px solid #414141;
  background: #5e5e5e;
}

.draw { width: 210px; }
.modify { width: 133px; }
.annotate { width: 126px; }
.layer { width: 252px; }
.block { width: 80px; }
.props { width: 201px; }
.group { width: 68px; }
.view { width: 62px; }

.body {
  display: flex;
  flex: 1;
  padding: 4px 1px 0;
}

.draw .body .column { margin-left: 7px; }
.annotate .body { padding-left: 4px; }
.annotate .big { width: 42px; }
.block .column { margin-left: 2px; }
.view .body { justify-content: center; }

.modify .body {
  display: grid;
  grid-template-columns: 28px 30px 41px 20px;
  grid-auto-rows: 24px;
  padding-left: 5px;
}

.big {
  display: flex;
  flex-direction: column;
  align-items: center;
  width: 40px;
  padding-top: 2px;
  line-height: 17px;
  white-space: nowrap;
}

.big svg {
  width: 34px;
  height: 34px;
  margin-bottom: 2px;
}

.big .arrow {
  margin-top: 3px;
}

.letter {
  height: 36px;
  font: 36px/34px "Open Sans", sans-serif;
}

.small {
  display: flex;
  align-items: center;
  gap: 5px;
  height: 24px;
}

.small svg {
  width: 20px;
  height: 20px;
}

.small.on {
  border: 1px solid #24406c;
  background: #5581c2;
}

.group .small {
  box-sizing: border-box;
  width: 24px;
  justify-content: center;
}

.panel h2 {
  display: flex;
  align-items: center;
  justify-content: center;
  gap: 7px;
  height: 18px;
  margin: 0;
  background: linear-gradient(#4d4d4d, #595959);
  font-size: 12px;
  font-weight: normal;
}

.launch {
  width: 8px;
  height: 8px;
}

.props .launch {
  margin: 0 -77px 0 69px;
}

.combo {
  display: flex;
  align-items: center;
  box-sizing: border-box;
  height: 22px;
  padding-right: 2px;
  border: 1px solid #2a2a2a;
  background: linear-gradient(#585858, #6c6c6c);
}

.combo select {
  flex: 1;
  min-width: 0;
  padding: 0;
  border: 0;
  appearance: none;
  background: none;
  color: #eee;
  font: 12px "Noto Sans", sans-serif;
}

.layer-side .combo {
  width: 208px;
  height: 23px;
}

.layer-side select {
  font-size: 13px;
}

.layer-tools {
  display: grid;
  grid-template-columns: repeat(5, 24px);
  margin: 1px;
}

.layer-tools .small {
  justify-content: center;
}

.combos {
  display: flex;
  flex-direction: column;
  gap: 2px;
  flex: 1;
  padding-top: 1px;
}

.swatch {
  width: 14px;
  height: 14px;
  margin: 0 10px 0 12px;
  border: 1px solid #999;
  background: #b6f07a;
}

.rule {
  width: 59px;
  height: 1px;
  margin: 0 2px 0 8px;
  background: #fff;
}

.rule.long {
  width: 64px;
  margin-left: 3px;
}

.tall {
  align-items: center;
  width: 61px;
  border-right: 2px solid #383838;
  background: linear-gradient(#6d6d6d, #484848);
  white-space: nowrap;
}

.tall svg {
  width: 34px;
  height: 34px;
  margin-top: 3px;
}

.tall span {
  line-height: 18px;
  margin: 2px 0 30px;
}

.caption {
  position: absolute;
  top: 115px;
  left: 253px;
  right: 0;
  z-index: 2;
  margin: 0;
  padding-left: 10px;
  background: rgba(232, 232, 232, .93);
  color: #0d7a20;
  font: 17px/22px "Noto Sans CJK SC", sans-serif;
  text-spacing-trim: space-all;
  white-space: nowrap;
}

.caption span {
  font-family: "Noto Sans", sans-serif;
}

.files {
  display: flex;
  align-items: flex-end;
  height: 26px;
  padding-left: 18px;
  border-bottom: 4px solid #5f5f5f;
  background: #363636;
}

.file {
  display: flex;
  align-items: center;
  justify-content: space-between;
  box-sizing: border-box;
  width: 123px;
  height: 22px;
  padding: 0 8px 0 14px;
  border-radius: 12px 12px 0 0;
  background: linear-gradient(#4c4c4c, #444);
  color: #a4a4a4;
  font-size: 13px;
}

.file.active {
  background: linear-gradient(#777, #5f5f5f);
  color: #fff;
}

.file .close svg {
  width: 9px;
  height: 9px;
}

.add {
  width: 22px;
  height: 16px;
  margin: 0 0 3px 11px;
  background: #555;
}

.canvas {
  position: relative;
  flex: 1;
  min-height: 0;
  background: #1f262f;
  overflow: hidden;
}

.plan {
  width: 100%;
  height: 100%;
}

.viewport {
  position: absolute;
  top: 5px;
  left: 3px;
  line-height: 18px;
}

.win-buttons {
  position: absolute;
  top: 10px;
  right: 11px;
  display: flex;
  gap: 10px;
}

.win-buttons svg {
  width: 10px;
  height: 10px;
}

.compass {
  position: absolute;
  top: 34px;
  right: 10px;
  display: grid;
  grid-template-columns: 20px 54px 20px;
  grid-template-rows: 17px 58px 17px;
  place-items: center;
  color: #b4b7bb;
  font-size: 13px;
  line-height: 17px;
}

.compass::before {
  content: "";
  position: absolute;
  top: 5px;
  left: 6px;
  width: 66px;
  height: 66px;
  border: 8px solid #3e464f;
  border-radius: 50%;
}

.compass > * {
  position: relative;
  grid-column: 2;
}

.compass .west { grid-column: 1; }
.compass .face { grid-row: 2; }
.compass .east { grid-column: 3; grid-row: 2; }

.face svg {
  width: 36px;
  height: 36px;
  background: #a9abaf;
}

.wcs {
  position: absolute;
  top: 140px;
  right: 34px;
  display: flex;
  align-items: center;
  justify-content: space-between;
  box-sizing: border-box;
  width: 48px;
  height: 17px;
  padding: 0 4px;
  border: 1px solid #a3a6ab;
  border-radius: 4px;
  background: #868b92;
  color: #4a4f57;
  font: 10px "Liberation Sans", sans-serif;
}

.wcs svg {
  width: 8px;
  height: 6px;
}

.navbar {
  position: absolute;
  top: 183px;
  right: 4px;
  border-radius: 4px;
  background: #50555c;
}

.navbar svg {
  width: 32px;
  height: 212px;
}

.command {
  display: flex;
  box-sizing: border-box;
  height: 55px;
  border-top: 3px solid #6a6a6a;
  border-bottom: 1px solid #999;
  background: #c8c8c8;
  color: #111;
}

.handle {
  display: flex;
  flex-direction: column;
  align-items: center;
  justify-content: space-between;
  width: 23px;
  background: linear-gradient(#8e8e8e, #484848);
}

.handle svg {
  width: 14px;
  height: 14px;
}

.dots {
  width: 18px;
  height: 6px;
  margin-top: 3px;
  background: linear-gradient(#bbb, #bbb) 0 0 / 3px 3px, none;
  background:
    linear-gradient(transparent 2px, #8a8a8a 2px 3px, transparent 3px 5px, #8a8a8a 5px),
    repeating-linear-gradient(90deg, #c4c4c4 0 2px, #8a8a8a 2px 3px);
}

.console {
  display: flex;
  flex-direction: column;
  flex: 1;
}

.console p {
  flex: 1;
  margin: 0;
  padding: 9px 0 0 3px;
  font: 12px/20px "Liberation Mono", "Noto Sans CJK SC", monospace;
}

.prompt {
  display: flex;
  align-items: center;
  height: 22px;
  padding-left: 5px;
  border-top: 1px solid #999;
  background: #fff;
}

.caret {
  width: 1px;
  height: 15px;
  margin-left: 17px;
  background: #000;
}

.prompt input {
  flex: 1;
  border: 0;
  outline: 0;
  background: none;
  font: 12px "Liberation Mono", monospace;
}
</style>
